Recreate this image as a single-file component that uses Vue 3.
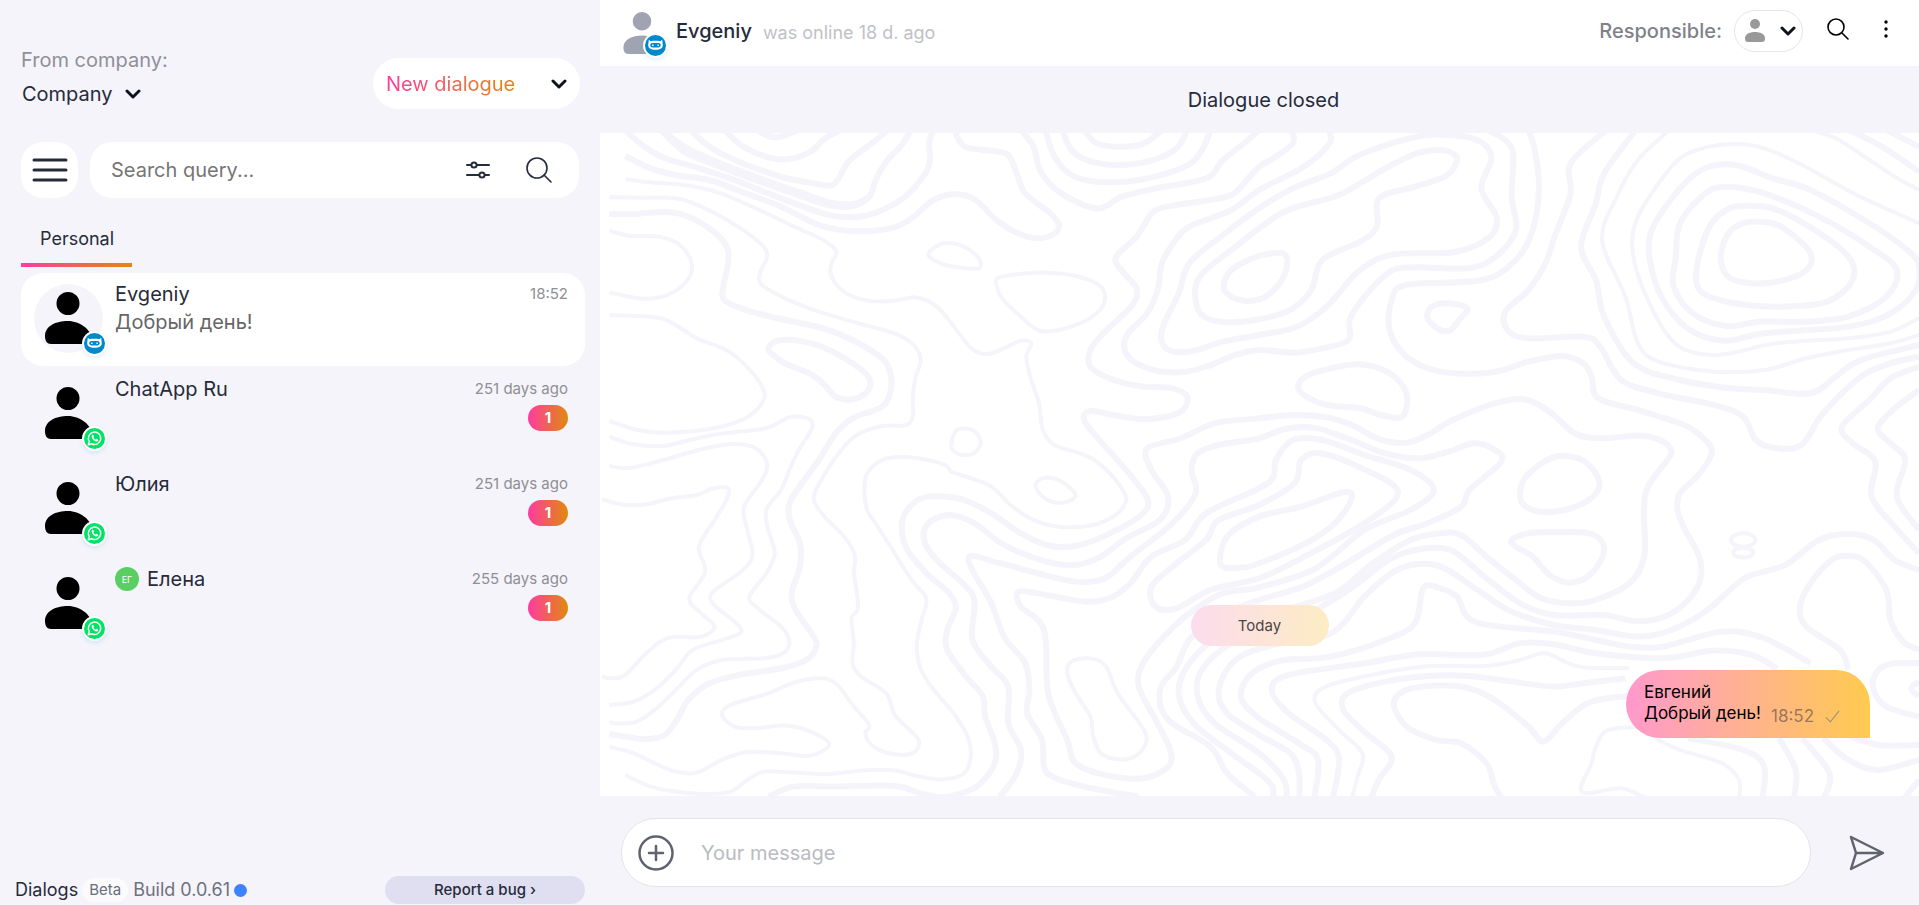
<template>
    <div class="app">
        <aside class="sidebar">
            <div class="top">
                <div class="company">
                    <span class="company-label">From company:</span>
                    <button class="company-select">
                        Company
                        <svg class="chevron" viewBox="0 0 16 12"><path d="M2 3l6 6 6-6" /></svg>
                    </button>
                </div>
                <button class="new-dialogue">
                    <span class="gradient-text">New dialogue</span>
                    <svg class="chevron" viewBox="0 0 16 12"><path d="M2 3l6 6 6-6" /></svg>
                </button>
            </div>

            <div class="search-row">
                <button class="menu-button" aria-label="Menu">
                    <svg width="36" height="24" viewBox="0 0 36 24"><path d="M2 2h32M2 12h32M2 22h32" /></svg>
                </button>
                <div class="search">
                    <input type="text" placeholder="Search query..." aria-label="Search query">
                    <button aria-label="Filter">
                        <svg width="24" height="20" viewBox="0 0 24 20">
                            <path d="M1 5h4M11 5h12M1 15h12M19 15h4" />
                            <circle cx="8" cy="5" r="2.6" />
                            <circle cx="16" cy="15" r="2.6" />
                        </svg>
                    </button>
                    <button aria-label="Search">
                        <svg class="lens" width="26" height="26" viewBox="0 0 26 26">
                            <circle cx="11" cy="11" r="10" />
                            <path d="M18 18l7 7" />
                        </svg>
                    </button>
                </div>
            </div>

            <nav class="tabs">
                <a href="#personal" class="tab">Personal</a>
            </nav>

            <ul class="chats">
                <li v-for="chat in chats" :key="chat.name">
                    <button class="chat" :class="{ active: chat.name === selected }" @click="selected = chat.name">
                        <span class="avatar">
                            <svg class="person" viewBox="0 0 46 52"><path :d="personPath" /></svg>
                            <span class="channel" :class="chat.channel">
                                <svg v-if="chat.channel === 'bot'" viewBox="0 0 22 22"><path :d="botPath" fill-rule="evenodd" /></svg>
                                <svg v-else viewBox="0 0 22 22">
                                    <path class="line" :d="bubblePath" />
                                    <path :d="phonePath" />
                                </svg>
                            </span>
                        </span>
                        <span class="chat-body">
                            <span class="chat-name">
                                <span v-if="chat.tag" class="tag">{{ chat.tag }}</span>
                                {{ chat.name }}
                            </span>
                            <span class="chat-text">{{ chat.text }}</span>
                        </span>
                        <span class="chat-side">
                            <span class="chat-time">{{ chat.time }}</span>
                            <span v-if="chat.unread" class="unread">{{ chat.unread }}</span>
                        </span>
                    </button>
                </li>
            </ul>

            <footer class="footer">
                <span class="product">Dialogs</span>
                <span class="beta">Beta</span>
                <span class="build">Build 0.0.61</span>
                <span class="dot"></span>
                <button class="report">Report a bug ›</button>
            </footer>
        </aside>

        <main class="dialog">
            <header class="header">
                <span class="header-avatar">
                    <svg class="person" viewBox="0 0 46 52"><path :d="personPath" /></svg>
                    <span class="channel bot">
                        <svg viewBox="0 0 22 22"><path :d="botPath" fill-rule="evenodd" /></svg>
                    </span>
                </span>
                <h1 class="header-name">Evgeniy</h1>
                <span class="header-status">was online 18 d. ago</span>
                <span class="responsible-label">Responsible:</span>
                <button class="responsible" aria-label="Responsible">
                    <svg class="responsible-person" viewBox="0 0 20 24">
                        <circle cx="10" cy="5" r="5" />
                        <path d="M0 19c0-4 5-6 10-6s10 2 10 6c0 3-1 4-3 4H3c-2 0-3-1-3-4z" />
                    </svg>
                    <svg class="chevron" viewBox="0 0 16 12"><path d="M2 3l6 6 6-6" /></svg>
                </button>
                <button class="header-button" aria-label="Search in dialogue">
                    <svg class="lens" width="22" height="22" viewBox="0 0 22 22">
                        <circle cx="9" cy="9" r="8" />
                        <path d="M15 15l6 6" />
                    </svg>
                </button>
                <button class="header-button more" aria-label="More">
                    <svg width="4" height="18" viewBox="0 0 4 18">
                        <circle cx="2" cy="2" r="1.7" />
                        <circle cx="2" cy="9" r="1.7" />
                        <circle cx="2" cy="16" r="1.7" />
                    </svg>
                </button>
            </header>

            <div class="closed">Dialogue closed</div>

            <section class="messages">
                <svg class="contours" viewBox="0 0 1319 663" preserveAspectRatio="xMidYMid slice" aria-hidden="true">
                    <g transform="scale(.4209 .3333) translate(0 -9)">
                        <path v-for="(d, i) in thickLines" :key="'a' + i" class="thick" :d="d" />
                        <path v-for="(d, i) in thinLines" :key="'b' + i" class="thin" :d="d" />
                        <ellipse class="thin" cx="2716" cy="1230" rx="29" ry="20" />
                        <ellipse class="thin" cx="2716" cy="1268" rx="24" ry="15" />
                    </g>
                </svg>
                <div class="day">Today</div>
                <div class="message">
                    <p>Евгений<br>Добрый день!</p>
                    <span class="message-time">18:52</span>
                    <svg class="check" viewBox="0 0 14 12"><path d="M1 7l4 4 8-10" /></svg>
                </div>
            </section>

            <form class="composer" @submit.prevent>
                <div class="composer-box">
                    <button type="button" aria-label="Attach">
                        <svg width="36" height="36" viewBox="0 0 36 36">
                            <circle cx="18" cy="18" r="16.5" />
                            <path d="M18 11v14M11 18h14" />
                        </svg>
                    </button>
                    <input v-model="draft" type="text" placeholder="Your message" aria-label="Your message">
                </div>
                <button class="send" aria-label="Send">
                    <svg width="36" height="36" viewBox="0 0 36 36"><path d="M2 2l32 16L2 34l5-16zM7 18h26" /></svg>
                </button>
            </form>
        </main>
    </div>
</template>

<script setup>
import { ref } from 'vue'

const selected = ref('Evgeniy')
const draft = ref('')

const chats = [
    { name: 'Evgeniy', text: 'Добрый день!', time: '18:52', channel: 'bot' },
    { name: 'ChatApp Ru', time: '251 days ago', channel: 'whatsapp', unread: 1 },
    { name: 'Юлия', time: '251 days ago', channel: 'whatsapp', unread: 1 },
    { name: 'Елена', tag: 'ЕГ', time: '255 days ago', channel: 'whatsapp', unread: 1 }
]

const personPath = 'M23 0a11.5 11.5 0 1 1 0 23a11.5 11.5 0 1 1 0-23zM0 44C0 34 11 29 23 29s23 9 23 16c0 5-2 7-6 7H6c-4 0-6-3-6-8z'
const botPath = 'M4 5l2 1.500c3-.7 7-.7 10 0L18 5l.6 5c.4 4-2.600 5.500-7.600 5.500S3 14 3.400 10zM7.500 8.500c-2.600 0-2.600 4.500 0 4.500h7c2.600 0 2.600-4.500 0-4.500zM7.500 10h1.500v1.500h-1.500zM13 10h1.500v1.500H13z'
const bubblePath = 'M4.500 17.500l1-3.400a6.500 6.500 0 1 1 2.500 2.400z'
const phonePath = 'M8.400 7.400c.6-.7 1.300-.5 1.600.3l.5 1.200-.7 1c.5 1 1.200 1.700 2.300 2.200l.9-.8 1.500.7c.7.4.4 1.200-.1 1.700-1.200 1-3 .3-4.500-1.100S7.500 9 8.400 7.400z'

// Every contour is a list of points, joined by a smooth curve. A trailing z closes it.
const smooth = (line) => {
    const closed = line.endsWith('z')
    const pts = line.replace('z', '').trim().split(' ').map((p) => p.split(',').map(Number))
    const n = pts.length
    const at = (i) => (closed ? pts[(i + n) % n] : pts[Math.max(0, Math.min(n - 1, i))])
    let d = `M${pts[0]}`
    for (let i = 0; i < (closed ? n : n - 1); i++) {
        const [a, b, c, e] = [at(i - 1), at(i), at(i + 1), at(i + 2)]
        d += `C${b[0] + (c[0] - a[0]) / 6},${b[1] + (c[1] - a[1]) / 6} ${c[0] - (e[0] - b[0]) / 6},${c[1] - (e[1] - b[1]) / 6} ${c}`
    }
    return closed ? d + 'Z' : d
}

const thickLines = [
    '60,0 100,45 155,85 230,112 330,155 420,200 530,250 590,262 650,250 720,205 765,145 784,95 782,40 792,0',
    '60,78 120,115 180,135 260,150 330,182 430,230 520,285 600,303 690,295 740,265 790,212 840,193 890,208 940,268 990,308 1040,325 1078,312 1090,285 1070,250 1010,190 990,130 970,75 930,62 870,52 848,20 848,0',
    '145,0 200,65 280,108 380,155 470,195 545,226 600,228 640,200 655,150 680,95 720,40 738,0',
    '150,0 200,50 280,97 380,145 470,185 545,217 600,222 635,205',
    '215,0 260,50 330,95 430,140 500,158 555,163 590,95 640,45 685,0',
    '295,0 340,50 400,82 450,87 500,65 530,30 570,0',
    '375,0 400,18 430,20 470,0',
    '22,252 80,252 160,246 210,260 270,305 303,355 303,410 293,470 297,512 360,545 440,570 530,595 600,630 670,685 690,730 690,785 670,830 600,865 560,910 520,990 480,1060 450,1120 452,1175 475,1240 475,1310 455,1390 465,1440 500,1505 515,1545 490,1590 430,1615 330,1635 260,1660 210,1710 180,1775 150,1818 100,1827 22,1812',
    '400,655 420,633 470,632 530,652 600,700 640,745 635,785 600,808 560,800 530,760 500,732 440,700 408,672z',
    '1000,0 1030,50 1045,120 1080,175 1140,220 1190,235 1240,200 1320,175 1440,145 1480,90 1540,30 1566,0',
    '1058,0 1080,80 1120,135 1180,155 1280,150 1390,110 1430,60 1450,0',
    '1098,0 1120,60 1160,92 1230,105 1310,92 1370,55 1395,0',
    '1150,0 1180,40 1230,50 1290,42 1335,0',
    '1644,0 1646,40 1600,85 1566,110 1530,160 1500,195 1440,212 1370,225 1315,245 1275,320 1225,383 1245,430 1275,475 1265,525 1200,605 1165,660 1165,710 1210,745 1280,768 1360,775 1395,800 1385,840 1340,862 1280,867 1220,855 1165,843 1150,870 1190,935 1250,1020 1300,1105 1290,1150 1220,1205 1140,1245 1070,1248 1000,1210 930,1150 860,1108 780,1100 740,1125 717,1180 730,1260 780,1335 830,1390 845,1435 825,1500 825,1560 870,1640 910,1700 915,1760 938,1840 938,1900 900,1965 850,1993 810,2002 760,1990 700,1968 560,1970 460,1970 400,2000',
    '1731,0 1733,40 1670,112 1566,180 1500,240 1400,290 1365,335 1335,400 1325,480 1300,550 1250,620 1255,680 1310,718 1380,727 1440,710 1510,675 1566,660 1646,668 1716,655 1779,630 1781,570 1820,495 1880,423 1940,412 2066,414 2130,378 2176,300 2166,200 2170,80 2155,35 2110,0',
    '1566,235 1646,175 1736,130 1796,80 1886,38 1966,15 2046,18 2096,38 2118,85 2094,175 2131,265 2110,325 2026,367 1886,373 1806,420 1726,530 1656,590 1566,615 1480,635 1400,665 1345,655 1335,600 1375,490 1400,400 1480,315z',
    '1626,245 1756,195 1866,115 1946,68 2010,62 2036,88 2010,138 1936,170 1851,205 1846,290 1806,335 1716,390 1690,480 1640,540 1566,568 1490,577 1435,560 1415,510 1425,440 1500,360z',
    '1566,378 1625,372 1630,420 1605,475 1566,508 1515,508 1482,475 1500,420z',
    '2206,0 2221,60 2231,170 2216,300 2176,390 2096,450 1916,465 1881,510 1876,600 1916,680 1996,725 2116,728 2206,695 2286,678 2336,700 2356,740 2371,805 2466,840 2576,885 2626,930 2641,970 2610,1035 2566,1090 2560,1140 2576,1195 2614,1290 2606,1375 2546,1450 2466,1474 2386,1455 2266,1455 2186,1420 2106,1345 2046,1280 2006,1255 1936,1260 1870,1292 1790,1370 1700,1440 1620,1480 1500,1540 1430,1620 1420,1700 1460,1780 1566,1870 1625,1950 1631,2010',
    '2391,0 2306,100 2306,190 2271,310 2246,400 2206,480 2151,545 2156,600 2206,625 2336,620 2376,650 2426,750 2516,790 2646,825 2716,860 2746,930 2796,955 2856,943 2906,850 2996,740 3066,700 3134,680',
    '2461,0 2386,130 2366,220 2331,350 2366,450 2386,560 2456,700 2566,750 2686,775 2766,780 2876,790 2936,740 2996,690 3134,645',
    '2676,103 2726,115 2786,145 2876,180 3016,280 3106,360 3134,410 3126,480 3066,550 2966,590 2766,610 2676,632 2596,605 2536,530 2501,430 2496,310 2556,190 2616,120z',
    '2681,170 2766,190 2896,260 3016,350 3081,420 3056,500 2966,560 2866,575 2756,575 2676,588 2596,550 2551,470 2556,380 2566,280 2626,190z',
    '2716,228 2786,235 2886,300 2966,380 2976,450 2916,515 2806,530 2696,520 2616,485 2606,410 2636,290 2676,240z',
    '2751,275 2806,290 2876,370 2856,430 2766,460 2686,445 2663,390 2676,320 2706,285z',
    '2966,0 3046,50 3134,125',
    '3056,0 3134,50',
    '2061,535 2016,520 1976,530 1966,565 1996,600 2021,600 2041,570z',
    '1661,780 1676,740 1736,715 1806,703 1876,730 1916,790 1906,860 1856,855 1806,835 1716,822z',
    '2536,990 2490,1070 2480,1140 2481,1280 2446,1360 2366,1410 2306,1420 2236,1405 2176,1350 2106,1280 2046,1215 1996,1210 1926,1230 1836,1300 1746,1390 1600,1450 1480,1510 1400,1600 1375,1690 1410,1780 1500,1870 1566,1930 1598,1970 1598,2010',
    '950,2000 990,1930 1000,1860 970,1780 970,1670 930,1610 885,1530 890,1420 870,1370 800,1290 770,1230 780,1180 830,1155 890,1180 960,1245 1060,1295 1130,1305 1190,1280 1250,1225 1330,1170 1350,1100 1310,1020 1300,955 1380,925 1460,880 1566,865 1646,855 1726,862 1786,885 1856,930 1916,938 1966,915 2026,870 2126,820 2196,808 2256,845 2316,910 2376,925 2476,917 2526,935 2546,965 2536,990',
    '3134,710 3066,745 3016,810 2951,890 2976,940 3030,995 3021,1100 3076,1190 3134,1270',
    '3134,780 3076,835 3036,895 3066,940 3101,990 3081,1100 3134,1200',
    '1280,2000 1150,1970 1075,1940 1055,1910 1050,1830 1015,1750 1020,1680 1010,1600 960,1520 930,1420 875,1285 950,1300 1040,1330 1130,1355 1200,1345 1260,1280 1360,1180 1415,1090 1405,1020 1420,970 1470,945 1566,925 1626,897 1696,893 1786,930 1866,970 1946,985 2016,965 2076,940 2126,960 2141,995 2066,1080 2046,1130 1966,1180 1886,1215 1760,1310 1670,1370 1566,1410 1470,1460 1400,1530 1370,1610 1330,1680 1350,1770 1450,1850 1490,1930 1555,2000',
    '1606,990 1600,1040 1566,1075 1440,1150 1390,1230 1310,1280 1260,1360 1210,1405 1150,1415 1060,1395 995,1385 1000,1430 1055,1500 1065,1690 1110,1830 1130,1900 1200,1935 1290,1945 1350,1910 1355,1860 1320,1770 1280,1670 1290,1600 1340,1520 1400,1450 1480,1390 1566,1372 1700,1315 1816,1200 1926,1140 1981,1080 1926,1020 1816,975 1716,930 1646,930z',
    '1666,990 1650,1060 1566,1125 1470,1170 1440,1230 1370,1300 1310,1370 1320,1430 1370,1435 1450,1380 1566,1345 1666,1285 1816,1180 1896,1085 1801,1010 1711,970z',
    '1566,1160 1666,1130 1766,1087 1786,1105 1746,1180 1676,1240 1566,1300 1520,1313 1475,1305 1490,1220z',
    '2186,1090 2200,1040 2250,990 2298,978 2345,1000 2375,1060 2350,1110 2290,1140 2235,1145 2195,1125z',
    '2166,1230 2206,1210 2266,1207 2356,1212 2386,1260 2356,1330 2306,1358 2256,1335 2216,1280 2176,1250z',
    '3134,1320 3076,1290 3026,1230 2966,1212 2896,1230 2816,1305 2726,1340 2676,1390 2626,1445 2546,1500 2466,1520 2366,1500 2266,1485 2166,1445 2096,1390 2006,1315 1946,1302 1886,1325 1816,1400 1766,1480 1716,1520 1600,1545 1510,1590 1470,1680 1490,1750 1566,1815 1640,1870 1661,1930 1661,2010',
    '2876,1600 2766,1525 2666,1505 2526,1550 2446,1550 2366,1530 2266,1505 2081,1477 2036,1400 1996,1375 1956,1375 1936,1480 1866,1530 1736,1580 1626,1590 1566,1615 1530,1660 1525,1710 1566,1765 1660,1840 1706,1890 1696,2010',
    '2796,1615 2736,1575 2646,1562 2526,1585 2366,1570 2266,1543 2186,1540 2096,1575 1946,1573 1816,1600 1636,1635 1596,1680 1636,1750 1726,1830 1756,1890 1740,2010',
    '2436,1645 2336,1660 2266,1670 2166,1655 2066,1638 1966,1638 1866,1655 1776,1690 1766,1740 1820,1810 1881,1880 1850,1950 1830,2010',
    '2486,1702 2426,1700 2346,1720 2286,1780 2241,1835 2206,1790 2126,1710 2056,1672 1986,1667 1916,1680 1886,1720 1916,1790 1986,1830 2046,1840 2106,1900 2126,1970 2146,2010',
    '2966,1620 2946,1560 2866,1490 2851,1430 2876,1360 2926,1290 2966,1278 3006,1295 3056,1380 3066,1470 3096,1535 3134,1560',
    '3134,1600 3066,1602 3031,1630 3026,1680 3056,1730 3134,1760',
    '3134,1655 3115,1675 3134,1700',
    '2966,1815 3036,1845 3134,1845',
    '2906,1825 2966,1890 3036,1920 3134,1890',
    '2586,1825 2716,1860 2766,1910 2761,2010',
    '2801,1825 2841,1920 2836,2010',
    '2856,1825 2921,1930 2906,2010',
    '3096,2010 3134,1950'
].map(smooth)

const thinLines = [
    '60,147 120,157 200,165 280,187 370,235 470,295 530,330 562,365 550,400 550,440 585,490 640,512 700,512 750,502 800,530 850,605 885,658 920,672 960,655 1000,632 1025,640 1013,680 1022,740 1043,820 1052,900 1080,945 1140,970 1180,995 1225,1050 1250,1105 1230,1150 1180,1182 1110,1192 1040,1175 980,1130 930,1070 870,1040 835,1025 820,1005 770,988 720,980 670,990 635,1030 628,1080 635,1140 660,1190 700,1270 740,1350 775,1405 765,1465 753,1540 760,1610 790,1675 840,1750 875,1825 880,1890 860,1935 810,1948 760,1940 700,1922 640,1920 540,1932 460,1928 390,1925 350,1950 310,1985 250,1992 180,1985 120,1970 60,1935',
    '22,201 100,203 180,205 250,235 330,292 385,345 397,380 380,430 385,465 440,505 520,545 620,582 700,610 745,645 762,690 750,740 743,800 743,860 725,886 670,888 610,915 570,965 540,1020 508,1100 530,1155 580,1220 605,1275 603,1330 612,1400 612,1440 598,1465 603,1540 600,1600 620,1640 680,1690 700,1755 740,1805 758,1835 745,1868 700,1873 650,1850 630,1810 640,1785 600,1725 560,1660 520,1645 460,1658 400,1690 310,1725 290,1755 320,1790 370,1795 440,1787 500,1805 545,1843 500,1877 430,1870 350,1866 290,1890 230,1928 180,1925 130,1900 80,1870 22,1850',
    '22,302 70,317 140,320 190,345 218,400 205,455 160,495 100,506 22,487',
    '22,555 130,562 170,578 230,625 300,660 345,705 385,770 387,815 345,865 270,895 160,908 90,900 22,873',
    '22,920 80,943 150,948 220,928 280,912 370,900 410,888 450,862 495,865 503,895 470,965 450,1020 430,1080 395,1140 400,1200 415,1270 395,1330 355,1400 375,1435 430,1490 450,1535 435,1570 390,1585 290,1590 230,1620 180,1680 130,1740 80,1778 22,1778',
    '22,1008 70,1014 150,990 250,955 320,942 370,955 397,1000 385,1050 342,1130 350,1200 362,1280 330,1330 265,1390 275,1430 320,1475 335,1507 290,1530 220,1560 180,1620 130,1680 80,1715 22,1725',
    '5,1108 60,1125 110,1123 170,1105 230,1095 270,1075 305,1075 300,1110 275,1165 235,1250 250,1325 212,1405 240,1450 272,1490 240,1520 160,1525 110,1570 60,1635 30,1645 5,1640',
    '780,375 800,348 825,338 865,350 900,385 900,415 850,412 810,400z',
    '945,445 990,433 1060,428 1130,438 1185,465 1200,505 1180,550 1120,590 1048,603 1000,560 955,505 943,470z',
    '835,940 848,900 885,900 905,935 890,968 860,975 838,960z',
    '1035,1070 1050,1045 1090,1050 1130,1095 1100,1118 1060,1108z',
    '1110,1630 1120,1595 1160,1585 1200,1605 1230,1690 1290,1795 1297,1840 1270,1880 1230,1888 1190,1870 1172,1820 1165,1760 1130,1690z',
    '2541,0 2466,90 2416,200 2381,330 2436,500 2466,640 2516,695 2646,725 2766,720 2866,685 2966,660 3066,640 3134,615',
    '3134,280 2986,195 2856,105 2766,55 2696,42 2606,60 2546,110 2466,260 2454,370 2486,500 2546,630 2606,670 2676,672 2796,640 2966,625 3066,605 3134,565',
    '2876,0 2936,25 3016,90 3076,140 3134,180',
    '2446,1615 2326,1610 2246,1570 2186,1590 2106,1608 1956,1610 1796,1645 1716,1675 1700,1720 1756,1800 1811,1870 1800,1940 1785,2010',
    '2486,1790 2396,1800 2366,1850 2356,1900 2331,1970 2346,1990 2426,1975 2486,2005',
    '2506,1825 2566,1860 2666,1900 2706,1950 2706,2010'
].map(smooth)
</script>

<style>
body {
    margin: 0;
}
</style>

<style scoped>
.app {
    display: flex;
    min-height: 100vh;
    font-family: Inter, "Noto Sans", sans-serif;
    font-size: 20px;
    line-height: 28px;
    color: #262b3a;
    background: #f5f4fa;
}

button,
input {
    padding: 0;
    border: none;
    outline: none;
    background: none;
    color: inherit;
    font: inherit;
}

button {
    cursor: pointer;
}

svg {
    display: block;
    fill: none;
    stroke: currentColor;
    stroke-width: 2;
    stroke-linecap: round;
    stroke-linejoin: round;
}

.sidebar {
    flex: 0 0 600px;
    box-sizing: border-box;
    display: flex;
    flex-direction: column;
    padding: 44px 15px 0 21px;
}

.top {
    display: flex;
    justify-content: space-between;
    align-items: center;
    padding-right: 5px;
}

.company {
    display: flex;
    flex-direction: column;
    align-items: flex-start;
    gap: 6px;
}

.company-label {
    color: #8f9098;
}

.company-select {
    display: flex;
    align-items: center;
    gap: 12px;
    padding-left: 1px;
}

.chevron {
    width: 16px;
    height: 12px;
    color: #10131c;
    stroke-width: 3;
}

.new-dialogue {
    display: flex;
    align-items: center;
    justify-content: space-between;
    width: 207px;
    height: 51px;
    padding: 0 13px;
    box-sizing: border-box;
    border-radius: 26px;
    background: #fff;
    margin-top: 14px;
}

.gradient-text {
    background: linear-gradient(90deg, #ff3ba0, #e1890d);
    background-clip: text;
    color: transparent;
}

.search-row {
    display: flex;
    gap: 12px;
    margin-top: 33px;
    padding-right: 6px;
}

.menu-button {
    display: flex;
    align-items: center;
    justify-content: center;
    width: 57px;
    height: 56px;
    border-radius: 22px;
    background: #fff;
}

.menu-button svg {
    stroke-width: 3;
}

.search {
    flex: 1;
    display: flex;
    align-items: center;
    gap: 36px;
    padding: 0 27px 0 21px;
    border-radius: 22px;
    background: #fff;
}

.search input {
    flex: 1;
    min-width: 0;
}

.search input::placeholder {
    color: #757575;
}

.lens {
    stroke-width: 1.6;
}

.tabs {
    display: flex;
    margin-top: 20px;
}

.tab {
    padding: 7px 18px 10px 19px;
    border-bottom: 4px solid;
    border-image: linear-gradient(90deg, #ff3ba0, #e1890d) 1;
    font-size: 18px;
    color: inherit;
    text-decoration: none;
}

.chats {
    flex: 1;
    display: flex;
    flex-direction: column;
    gap: 2px;
    margin: 6px 0 0;
    padding: 0;
    list-style: none;
}

.chat {
    display: flex;
    width: 100%;
    height: 93px;
    box-sizing: border-box;
    padding: 7px 17px 0 13px;
    border-radius: 22px;
    text-align: left;
}

.chat.active {
    background: #fff;
}

.avatar {
    position: relative;
    display: flex;
    align-items: center;
    justify-content: center;
    width: 69px;
    height: 69px;
    margin-top: 4px;
    border-radius: 50%;
    background: #f5f4fa;
}

.person {
    width: 46px;
    height: 52px;
    margin: 0 1px 2px 0;
    fill: #000;
    stroke: none;
}

.channel {
    position: absolute;
    right: -4px;
    bottom: -3px;
    width: 21px;
    height: 21px;
    border: 2px solid #fff;
    border-radius: 50%;
    box-shadow: 0 2px 4px rgba(0, 160, 220, 0.15);
}

.channel svg {
    fill: #fff;
    stroke: none;
}

.channel .line {
    fill: none;
    stroke: #fff;
    stroke-width: 1.5;
}

.bot {
    background: #0088cc;
}

.whatsapp {
    background: #00e466;
}

.chat-body {
    flex: 1;
    display: flex;
    flex-direction: column;
    margin-left: 12px;
}

.chat-name {
    display: flex;
    align-items: center;
    gap: 8px;
}

.chat-text {
    color: #666;
}

.tag {
    width: 24px;
    height: 24px;
    border-radius: 50%;
    background: #5ace63;
    color: #fff;
    font-size: 9px;
    line-height: 25px;
    text-align: center;
}

.chat-side {
    display: flex;
    flex-direction: column;
    align-items: flex-end;
    gap: 2px;
}

.chat-time {
    font-size: 15px;
    color: #8f8f94;
}

.unread {
    width: 40px;
    border-radius: 13px;
    background: linear-gradient(90deg, #ff3ba0, #e1890d);
    color: #fff;
    font-size: 15px;
    font-weight: 700;
    line-height: 26px;
    text-align: center;
}

.footer {
    display: flex;
    align-items: center;
    height: 30px;
    margin-left: -6px;
    font-size: 18px;
}

.beta {
    margin: 0 5px 0 4px;
    padding: 0 7px;
    border-radius: 12px;
    background: #fbfbfd;
    color: #6b6d78;
    font-size: 15px;
    line-height: 24px;
}

.build {
    color: #6f717c;
}

.dot {
    width: 13px;
    height: 13px;
    margin-left: 4px;
    border-radius: 50%;
    background: #3e82fc;
}

.report {
    width: 200px;
    margin-left: auto;
    border-radius: 14px;
    background: #dfdff1;
    font-size: 15px;
    font-weight: 500;
}

.dialog {
    flex: 1;
    min-width: 0;
    display: flex;
    flex-direction: column;
}

.header {
    display: flex;
    align-items: center;
    height: 66px;
    box-sizing: border-box;
    padding: 0 31px 4px 23px;
    background: #fff;
}

.header-avatar {
    position: relative;
    padding-top: 5px;
}

.header-avatar .person {
    width: 38px;
    height: 42px;
    fill: #a0a3b1;
}

.header-avatar .channel {
    right: -6px;
    bottom: -2px;
}

.header-name {
    margin: 0 11px 0 14px;
    font-size: 20px;
    font-weight: 500;
}

.header-status {
    padding-top: 4px;
    font-size: 18px;
    color: #c0c1c6;
}

.responsible-label {
    margin-left: auto;
    font-weight: 500;
    color: #7f818a;
}

.responsible {
    display: flex;
    align-items: center;
    justify-content: space-between;
    width: 69px;
    height: 42px;
    box-sizing: border-box;
    margin: 0 24px 0 12px;
    padding: 0 6px 0 10px;
    border: 1px solid #e6e6ea;
    border-radius: 21px;
}

.responsible-person {
    width: 20px;
    height: 24px;
    fill: #999;
    stroke: none;
}

.header-button {
    padding-bottom: 5px;
    color: #000;
}

.more {
    margin-left: 35px;
}

.more svg {
    fill: #000;
    stroke: none;
}

.closed {
    padding: 20px 0 19px 8px;
    text-align: center;
}

.messages {
    position: relative;
    flex: 1;
    display: flex;
    flex-direction: column;
    justify-content: flex-end;
    align-items: center;
    gap: 24px;
    padding: 24px 49px 58px;
    overflow: hidden;
    background: #fff;
}

.contours {
    position: absolute;
    inset: 0;
    width: 100%;
    height: 100%;
    stroke: #f5f4fa;
    stroke-linecap: butt;
}

.thick,
.thin {
    vector-effect: non-scaling-stroke;
}

.thick {
    stroke-width: 6;
}

.thin {
    stroke-width: 4;
}

.day {
    position: relative;
    width: 138px;
    border-radius: 21px;
    background: linear-gradient(90deg, #fcdcee, #fdecc4);
    color: #4d4648;
    font-size: 15px;
    line-height: 41px;
    text-align: center;
}

.message {
    position: relative;
    align-self: flex-end;
    display: flex;
    align-items: flex-end;
    padding: 12px 30px 14px 18px;
    border-radius: 34px 34px 0 34px;
    background: linear-gradient(90deg, #ff99cd, #ffcb4f);
    color: #000;
    font-size: 17px;
    line-height: 21px;
}

.message p {
    margin: 0;
}

.message-time {
    margin: 0 11px -3px 10px;
    color: rgba(60, 60, 70, 0.55);
}

.check {
    width: 15px;
    height: 13px;
    margin-bottom: 1px;
    color: #a0917a;
    stroke-width: 1;
}

.composer {
    display: flex;
    align-items: center;
    gap: 38px;
    padding: 22px 34px 18px 21px;
    color: #60636f;
}

.composer svg {
    stroke-width: 2.5;
}

.composer-box {
    flex: 1;
    display: flex;
    align-items: center;
    gap: 27px;
    height: 67px;
    padding: 0 16px;
    border: 1px solid #e4e4e8;
    border-radius: 35px;
    background: #fff;
}

.composer-box input {
    flex: 1;
    color: #262b3a;
}

.composer-box input::placeholder {
    color: #b9bbc2;
}
</style>
